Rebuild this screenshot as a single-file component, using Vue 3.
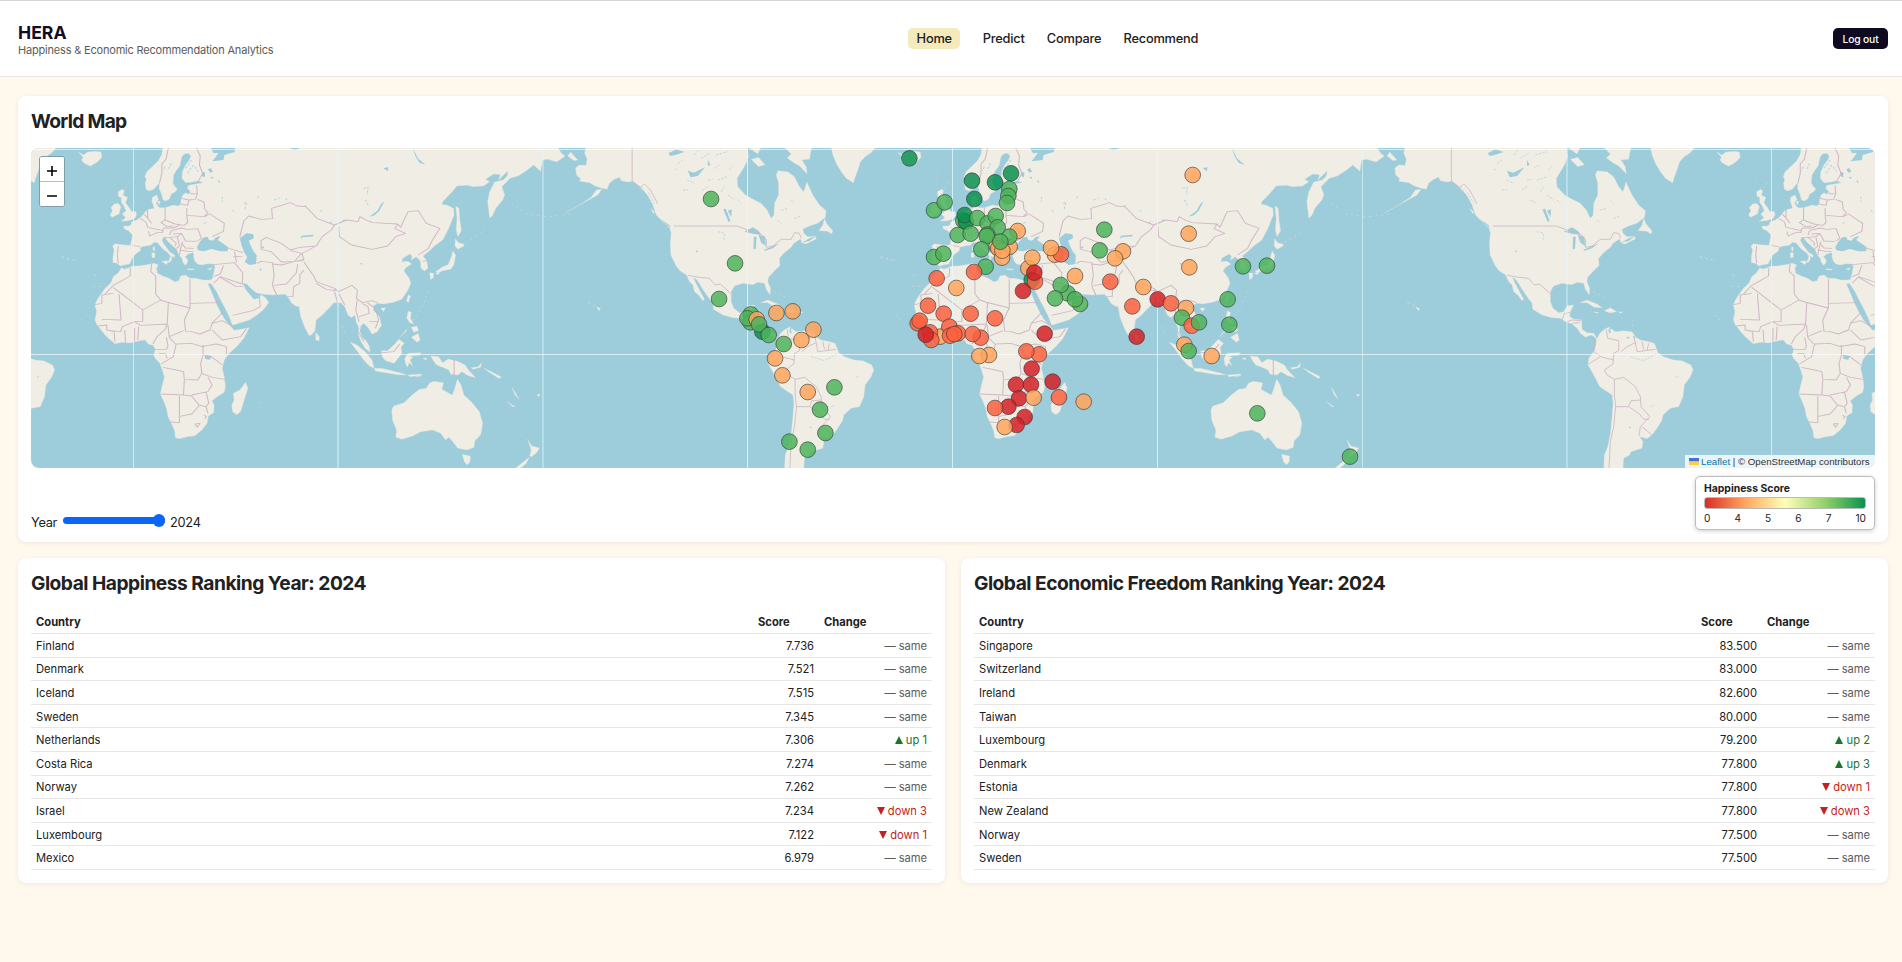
<script setup>
const nav = ['Home', 'Predict', 'Compare', 'Recommend']

const tables = [
  {
    title: 'Global Happiness Ranking Year: 2024',
    rows: [
      ['Finland', '7.736', 0], ['Denmark', '7.521', 0], ['Iceland', '7.515', 0], ['Sweden', '7.345', 0],
      ['Netherlands', '7.306', 1], ['Costa Rica', '7.274', 0], ['Norway', '7.262', 0], ['Israel', '7.234', -3],
      ['Luxembourg', '7.122', -1], ['Mexico', '6.979', 0],
    ],
  },
  {
    title: 'Global Economic Freedom Ranking Year: 2024',
    rows: [
      ['Singapore', '83.500', 0], ['Switzerland', '83.000', 0], ['Ireland', '82.600', 0], ['Taiwan', '80.000', 0],
      ['Luxembourg', '79.200', 2], ['Denmark', '77.800', 3], ['Estonia', '77.800', -1], ['New Zealand', '77.800', -3],
      ['Norway', '77.500', 0], ['Sweden', '77.500', 0],
    ],
  },
]

const kind = (n) => (n > 0 ? 'up' : n < 0 ? 'down' : 'same')
const ticks = [0, 4, 5, 6, 7, 10]

// World copies, left to right, in map units (three per pixel)
const copies = [306.9, 2764.5, 5222.1]

const meridians = [
  { x: 307.5, w: 3, o: 0.75 }, { x: 921, w: 4, o: 0.7 }, { x: 1536, w: 6, o: 0.4 }, { x: 2149.5, w: 3, o: 0.85 },
  { x: 2764.5, w: 3, o: 0.8 }, { x: 3379.5, w: 3, o: 0.8 }, { x: 3994.5, w: 3, o: 0.6 }, { x: 4608, w: 6, o: 0.4 },
  { x: 5221.5, w: 3, o: 0.75 },
]

// d: very high, g: high, o: medium, t: low, r: very low
const pinGroups = [
  {
    dx: 1527.2, dy: -24,
    pins: [
      [1108, 55, 'd'], [513, 177, 'g'], [585, 370, 'g'], [537, 477, 'g'], [632, 523, 'g'], [631, 547, 'g'], [622, 535, 'g'],
      [650, 538, 'o'], [667, 575, 'd'], [657, 553, 'g'], [686, 585, 'g'], [709, 519, 'o'], [758, 514, 'o'], [820, 569, 'o'],
      [784, 600, 'o'], [731, 612, 'g'], [705, 655, 'o'], [727, 706, 'o'], [803, 756, 'o'], [883, 742, 'g'], [840, 809, 'g'],
      [856, 879, 'g'], [748, 905, 'g'], [803, 929, 'g'],
    ],
  },
  {
    dx: 2577, dy: -24,
    pins: [
      [132, 211, 'g'], [164, 187, 'g'], [246, 122, 'd'], [315, 127, 'd'], [363, 100, 'd'], [358, 147, 'g'], [355, 168, 'g'],
      [351, 189, 'g'], [253, 177, 'd'], [220, 242, 'g'], [228, 245, 'd'], [224, 225, 'd'], [262, 234, 'g'], [293, 250, 'g'],
      [317, 228, 'g'], [203, 285, 'g'], [242, 281, 'g'], [383, 273, 'o'], [359, 320, 'o'], [320, 316, 'o'], [325, 325, 'o'],
      [336, 353, 'o'], [337, 332, 'o'], [358, 290, 'g'], [323, 262, 'g'], [292, 284, 'g'], [290, 288, 'g'], [331, 305, 'g'],
      [274, 328, 'g'], [132, 351, 'g'], [160, 341, 'g'], [287, 380, 'g'], [252, 396, 't'], [140, 415, 't'], [199, 444, 'o'],
      [495, 344, 'o'], [513, 343, 't'], [483, 324, 'o'], [415, 385, 'o'], [427, 353, 'o'], [425, 420, 'd'], [435, 425, 't'],
      [433, 398, 'r'], [399, 453, 'r'], [555, 408, 'o'], [533, 460, 'g'], [512, 435, 'g'], [495, 475, 'g'], [570, 492, 'g'],
      [555, 478, 'g'], [114, 497, 't'], [161, 521, 't'], [242, 521, 't'], [315, 535, 't'],
    ],
  },
  {
    dx: 2577, dy: 426,
    pins: [
      [83, 100, 't'], [89, 92, 't'], [150, 140, 'o'], [120, 127, 't'], [124, 150, 't'], [107, 134, 'r'], [178, 110, 't'],
      [204, 130, 't'], [180, 137, 't'], [193, 132, 't'], [272, 143, 't'], [248, 132, 't'], [464, 131, 'r'], [297, 195, 'o'],
      [268, 198, 'o'], [447, 193, 't'], [409, 184, 't'], [425, 236, 'r'], [378, 284, 'r'], [423, 284, 'r'], [488, 275, 'r'],
      [507, 322, 't'], [387, 325, 'r'], [431, 323, 'o'], [355, 350, 'r'], [315, 354, 't'], [404, 381, 'r'], [380, 405, 'r'],
      [344, 411, 'o'], [581, 335, 'o'],
    ],
  },
  {
    dx: 3147, dy: -24,
    pins: [
      [73, 269, 'g'], [59, 331, 'g'], [129, 334, 'o'], [105, 355, 'o'], [91, 425, 't'], [338, 105, 'o'], [326, 281, 'o'],
      [328, 382, 'o'], [190, 441, 'o'], [157, 499, 't'], [233, 478, 'r'], [273, 490, 't'], [318, 504, 'o'], [170, 590, 'r'],
      [306, 533, 'g'], [335, 557, 't'], [357, 547, 'g'], [313, 614, 'o'], [326, 633, 'g'], [395, 648, 'o'], [443, 478, 'g'],
      [448, 554, 'g'], [489, 379, 'g'], [561, 377, 'g'], [532, 820, 'g'], [810, 950, 'g'],
    ],
  },
]
</script>

<template>
  <div class="page">
    <header class="topbar">
      <div class="brand">
        <div class="brand-name">HERA</div>
        <div class="brand-sub">Happiness &amp; Economic Recommendation Analytics</div>
      </div>
      <nav class="nav">
        <a v-for="(n, i) in nav" :key="n" :class="['nav-link', { active: i === 0 }]">{{ n }}</a>
      </nav>
      <button class="logout">Log out</button>
    </header>

    <main class="content">
      <section class="card map-card">
        <h2 class="map-title">World Map</h2>
        <div class="map">
          <svg class="map-svg" viewBox="0 0 5532 960" preserveAspectRatio="none">
            <defs>
              <g id="world">
                <!-- Europe, Africa, Asia and Oceania -->
                <g transform="scale(1.2245 1) translate(-327 -24)">
                  <path class="land" d="M400 20L396 45L388 62L375 78L360 95L355 110L359 118L356 130L358 148L366 153L378 147L386 135L391 130L390 145L396 162L400 180L407 183L416 176L420 162L430 155L435 147L428 138L424 128L426 105L432 92L441 78L446 50L452 42L462 40L468 48L464 60L455 75L447 95L446 115L455 128L470 127L487 122L497 128L480 132L462 136L459 145L466 153L462 163L455 158L448 165L444 180L443 192L438 198L425 195L405 203L398 203L392 203L387 198L383 188L389 178L384 165L374 171L372 183L376 196L378 205L365 208L358 213L352 222L344 233L335 240L322 246L322 253L316 258L303 258L304 266L315 272L325 285L322 305L320 316L300 314L282 311L276 318L280 330L277 350L277 368L287 370L295 378L304 375L318 372L325 355L330 345L344 332L345 322L357 318L370 316L378 307L386 308L393 318L400 328L412 338L418 348L416 358L411 368L418 366L422 355L420 349L428 352L429 346L416 335L410 325L402 312L397 300L401 293L406 294L412 305L424 318L433 328L437 340L440 348L446 354L448 366L454 376L459 370L461 360L454 350L462 342L472 338L476 342L474 348L478 364L484 372L495 375L510 371L524 372L527 380L524 400L520 418L512 420L498 420L480 415L466 415L455 405L443 408L438 422L428 425L415 415L400 408L386 400L384 385L388 374L378 370L360 374L340 378L325 378L315 384L305 387L298 383L290 398L278 410L272 428L258 445L246 465L238 480L233 495L237 515L233 540L238 555L248 570L258 585L268 597L282 611L300 607L318 609L340 603L356 600L363 612L375 616L381 628L377 645L380 655L392 670L398 690L403 712L398 735L393 762L402 785L408 805L412 830L420 850L428 872L430 893L440 896L460 890L478 887L495 870L508 850L511 828L524 818L525 795L520 782L535 768L550 757L553 740L550 710L545 685L550 660L562 640L580 620L598 595L611 563L590 568L574 571L567 560L552 540L540 515L530 490L520 460L510 432L517 430L523 440L531 455L540 478L552 505L562 530L570 556L590 548L612 540L630 525L645 510L655 495L659 487L650 472L640 464L634 475L622 478L614 466L603 450L595 430L605 432L615 445L628 458L645 463L670 465L700 463L708 475L715 490L725 498L733 500L737 530L748 565L758 587L764 584L772 572L775 540L790 525L810 500L818 488L835 488L845 500L853 525L862 533L870 525L873 545L880 565L878 582L885 605L895 625L907 637L905 618L898 603L888 592L882 575L884 558L892 550L903 565L912 583L925 575L935 555L930 530L915 510L915 498L925 490L940 492L965 487L985 478L1000 450L1007 430L1003 415L990 392L996 382L1009 372L1000 364L985 365L987 355L1005 342L1010 348L1008 360L1020 350L1030 362L1032 385L1040 393L1049 385L1046 362L1037 348L1050 335L1065 318L1085 300L1100 265L1113 225L1112 205L1095 195L1083 193L1085 185L1105 160L1120 138L1145 136L1160 140L1185 138L1200 125L1190 118L1210 102L1226 104L1222 120L1245 92L1243 108L1233 120L1212 126L1200 155L1195 185L1200 235L1208 225L1215 205L1232 180L1237 165L1230 140L1250 115L1270 108L1290 92L1308 75L1325 94L1330 60L1342 58L1365 66L1385 48L1376 40L1366 20Z" />
                  <path class="land" d="M290 155L300 148L305 152L302 166L313 172L308 188L318 205L322 214L334 215L335 226L330 236L315 242L297 244L308 233L300 222L309 212L304 198L298 188L297 172L291 170ZM280 192L290 190L297 200L292 222L275 232L270 225L276 212L272 203ZM192 35L205 45L215 36L235 34L248 36L250 52L240 65L222 79L207 70L200 60L204 52ZM602 727L608 745L600 775L590 815L580 824L570 815L568 795L574 780L572 760L588 750ZM774 578L783 590L782 602L774 600ZM858 606L875 615L895 635L912 660L917 685L905 678L890 658L875 632ZM917 685L935 685L960 692L985 700L997 705L975 704L945 698L920 693ZM1000 705L1030 702L1034 706L1004 710ZM1018 712L1035 702L1030 708ZM935 632L950 632L965 615L978 598L991 610L983 622L985 640L975 656L966 670L945 662L937 650ZM992 655L1000 640L1032 638L1028 646L1002 648L1012 652L1005 660L1012 678L1003 668L999 681L994 672ZM1000 513L1008 517L1006 535L1014 552L1005 548L997 535ZM1008 592L1025 580L1030 600L1022 607ZM1008 562L1022 558L1026 572L1014 577ZM980 592L997 567L995 574ZM1001 464L1006 468L1001 488L996 482ZM933 505L945 503L940 515ZM1116 296L1124 308L1138 313L1136 319L1122 328L1115 318ZM1110 333L1117 345L1112 375L1105 388L1085 392L1075 398L1068 395L1085 380L1098 374L1105 355ZM1053 398L1063 400L1062 413L1055 419ZM1066 400L1078 396L1074 404ZM1117 198L1125 205L1127 240L1131 272L1122 290L1118 270L1120 235ZM1056 648L1075 650L1085 668L1098 657L1120 663L1140 675L1148 690L1166 713L1148 707L1132 695L1122 705L1105 703L1100 690L1085 682L1070 675L1062 662ZM1154 683L1172 680L1180 668L1178 682L1160 688ZM1063 724L1087 728L1083 748L1108 765L1114 748L1121 717L1130 735L1137 765L1155 785L1175 815L1183 850L1178 885L1164 902L1162 922L1145 930L1122 925L1110 905L1100 892L1092 900L1080 880L1060 870L1030 876L1012 888L985 898L970 892L972 870L962 840L960 810L965 798L990 788L1010 765L1028 748L1045 745L1052 730ZM1133 943L1153 948L1152 965L1145 975L1138 965ZM1293 898L1303 918L1322 924L1315 938L1303 950L1298 948L1302 930ZM1297 952L1290 970L1275 986L1262 986L1280 968ZM372 338L380 338L380 352L373 353ZM376 320L380 322L379 334L375 330ZM396 364L412 362L409 374ZM460 386L476 387L474 390L460 389ZM508 387L520 383L516 390ZM385 184L393 184L391 195ZM1316 764L1325 762L1320 770ZM1243 785L1262 800L1257 800ZM1255 742L1264 760L1272 778L1262 764ZM1186 684L1228 710L1224 716L1198 696ZM1036 655L1046 654L1044 660Z" />
                  <path class="water" d="M485 331L483 322L490 305L500 292L510 291L512 299L522 302L530 292L541 288L534 300L546 310L560 322L558 334L540 334L518 327L500 334ZM588 295L604 280L621 283L622 295L610 302L615 318L622 335L629 345L628 372L612 375L600 366L606 352L598 335L592 315ZM905 230L918 226L930 212L942 184L934 192L925 212ZM737 297L740 287L768 284L768 289L742 292ZM515 20L524 40L536 38L526 56L520 64L548 60L550 45L575 36L578 20ZM710 24L722 31L736 24ZM502 648L518 647L515 659L503 657ZM510 88L517 84L522 95L515 98ZM496 95L503 98L502 112L495 108ZM516 112L522 110L520 118ZM640 325L645 318L648 325ZM882 370L888 370L887 375ZM535 118L540 128L536 128ZM940 84L952 82L950 94ZM1012 24L1024 55L1043 75L1028 68L1018 48ZM636 385L642 388L638 393Z" />
                  <path class="speck" d="M890 145L902 142L900 165M895 180L905 200M598 190L605 186L600 210M672 180L685 174M700 175L704 180M745 200L752 195M785 215L792 208M545 170L545 185M570 210L574 215M630 175L636 168M808 250L815 240M840 242L846 238M500 250L510 246M420 70L412 90M405 80L400 92M455 85L470 60M478 80L486 95M460 100L474 75" />
                  <path class="islet" d="M1012 542L1035 500L1050 450M1006 545L990 590M1255 190L1290 222L1345 230L1400 222M1140 308L1170 285L1195 262M150 352L185 362M230 405L236 407M228 438L252 440M188 525L200 540M1440 488L1468 508M636 790L650 782M840 560L848 590M286 122L290 128M306 146L320 120" />
                  <path class="border" d="M413 24L407 58L397 72L397 100L391 130M482 24L491 48L489 75L497 100L487 122M482 136L484 160L479 178L463 180L445 175M463 180L460 196L443 192M484 160L470 162L462 153M484 178L500 186L502 208L510 218L500 230L458 226L458 204M502 230L515 222L550 250L548 274L520 290M458 226L460 248L452 256L430 252L405 240L405 203M404 240L395 248L410 260L425 258M362 208L362 235L372 250M364 235L352 222M344 236L358 246L362 262L385 268L400 272L398 278L385 278L368 288L364 274M398 272L402 264L425 264L440 256M416 285L420 272L445 264L460 268L485 266L494 296L483 303M445 280L455 303L482 304M400 292L418 292L435 290L445 280L425 282M416 292L432 310L430 318M435 290L440 318L432 326M445 310L455 324L475 325M440 330L462 334L474 334M448 305L442 330L440 346M344 320L325 316M290 318L288 345L290 370M320 384L319 408L296 424L278 436L258 462M372 372L370 395L382 408L382 462L394 480L408 486L466 504L466 418M278 442L350 510L394 480M233 494L250 490L250 465L278 460M292 462L297 540L250 538M350 510L350 545L330 545L300 560L296 575L270 572M330 545L345 556L410 552L413 486M466 504L466 490L538 488M466 504L452 540L455 574L470 575L490 582L515 570L520 550L545 518M520 550L545 542L572 560M520 570L545 600L590 590L604 566M240 558L262 555L262 570L280 575L282 605M306 570L308 608M330 565L330 604M340 560L338 600M375 612L385 590L405 568L410 552M412 555L415 590L450 572M380 628L408 628L412 618L408 592M432 612L470 610L495 620L498 616L498 645L492 670L495 700L485 720L452 718L450 695L432 690L400 682M432 612L425 650L395 672M390 640L405 640L410 655M415 592L430 612M495 620L530 612L555 620L555 645M500 645L518 650L546 675M495 700L520 712L552 718M452 720L450 765L394 762M450 765L470 768L488 795L505 800L510 820M440 768L440 848L418 846M438 830L470 822L488 797M470 765L510 755L520 735L510 712M505 755L512 790L505 800M478 852L490 850L484 862ZM500 825L506 830L502 836M524 374L575 368L595 398L594 432L540 410L524 430M524 410L540 402L548 376M560 325L596 338M575 335L580 368M572 350L594 350M596 440L580 440L540 412M636 470L638 500L620 512L570 526M588 290L598 242L610 228L640 238L668 236L666 205L712 188L728 198L750 200L778 236L820 255L812 270L790 290L775 318L735 322L712 330L690 310L652 292L640 302L640 328M640 328L665 335L690 366L722 364L738 342L775 318M712 332L740 340L745 358L725 364M630 370L640 364L668 368L672 405L668 436L678 465M668 372L690 375L722 364L745 362M672 436L702 432L726 400L730 372M745 366L770 410L775 425L820 445L830 455L862 436L876 450L874 475L888 488L912 482L925 488M745 390L735 405L735 430L720 440L718 470L705 470M775 430L800 448L822 452L820 445M820 455L828 490M830 460L845 495M876 475L872 510L880 545M888 490L902 500L905 520L880 530M900 488L920 505L928 540L920 565M905 545L925 545M820 255L850 240L878 245L882 230L900 242L915 248L975 252L982 262L1000 215L1025 212L1045 250L1078 265L1060 300L1050 325L1025 345M830 258L832 290L862 315L912 328L950 318L970 290L994 280L968 266L975 252M1113 660L1113 705M936 638L965 635L980 612M878 575L892 605M1036 364L1048 362" />
                </g>
                <!-- The Americas and Greenland -->
                <g transform="translate(-1174 -24)">
                  <path class="land" d="M75 20L70 40L78 58L74 76L55 75L43 84L46 105L58 116L55 124L85 128L102 138L122 145L138 148L145 130L160 118L175 112L180 122L200 126L215 124L235 140L258 165L275 195L285 225L305 245L325 262L330 280L327 310L329 345L345 378L356 392L376 405L385 425L395 435L400 455L412 465L425 482L430 478L415 450L402 425L396 412L408 420L425 448L440 470L455 490L457 508L485 525L515 533L540 535L555 545L575 552L590 565L600 580L615 592L632 585L642 590L648 600L646 617L640 635L625 655L623 675L640 705L658 740L695 765L698 790L695 830L690 880L682 920L672 945L670 986L728 986L730 955L748 945L752 935L785 925L788 905L778 890L800 896L815 885L830 865L845 840L848 825L870 805L895 800L908 770L912 735L930 710L938 690L932 675L905 662L880 660L850 650L833 638L822 610L800 604L780 600L765 590L755 575L730 572L705 575L692 566L684 576L688 560L672 568L658 580L650 596L640 580L620 578L605 568L604 540L580 537L568 530L570 515L580 495L560 497L550 515L535 518L518 505L510 485L510 455L520 438L545 430L575 434L590 427L610 430L615 448L627 465L628 445L620 425L622 412L640 392L656 377L655 355L668 340L690 322L698 310L718 297L722 308L745 295L765 288L740 290L728 280L725 268L745 258L770 250L793 232L795 212L775 195L755 165L737 125L728 155L715 140L700 110L680 95L650 92L645 105L652 130L652 165L640 190L638 225L630 235L618 210L600 190L570 175L553 165L530 140L528 115L545 88L555 70L562 50L558 20ZM810 20L815 45L825 70L840 95L855 115L877 129L882 112L892 85L898 65L912 50L930 38L945 20ZM668 20L690 42L678 54L700 70L715 78L738 102L735 80L722 60L745 58L752 20ZM570 58L592 52L612 74L592 80L580 68ZM790 235L797 252L815 272L812 282L798 274L773 272L785 255ZM598 488L620 480L650 492L665 503L642 502L620 488ZM672 512L690 503L709 515L688 519ZM640 516L655 517L650 520ZM714 515L727 516L720 520ZM758 590L766 588L763 596ZM268 205L280 215L278 222ZM300 238L328 258L322 262ZM106 500L118 506L114 512ZM28 36L50 60L38 62L20 48ZM560 20L600 20L590 42ZM720 308L745 303L762 290L766 296L735 312Z" />
                  <path class="land" d="M122 148L110 165L60 192L12 219L50 198L90 172L105 150Z" />
                  <path class="water" d="M550 275L575 262L592 272L600 284L578 282ZM578 290L586 290L584 326L577 328ZM592 284L612 290L614 318L600 308ZM608 330L655 310L635 325L612 332ZM486 208L494 206L508 242L502 246ZM500 212L512 208L510 232ZM322 40L345 28L370 36L345 44L328 48ZM380 92L398 98L432 82L410 108L388 112ZM404 330L410 334L407 338ZM684 568L692 575L688 582ZM540 540L548 544L545 548ZM745 860L751 860L750 866ZM738 590L748 592L742 597ZM440 60L448 75L440 78Z" />
                  <path class="speck" d="M400 45L412 30M420 55L445 40M350 70L365 60M460 85L475 75M470 120L500 110M425 150L440 140M480 155L490 140M365 150L380 150M505 90L515 78M440 120L455 118M500 165L520 180M450 180L470 190M530 180L540 190M378 120L400 130M340 90L350 85M465 45L500 35M660 210L680 205M700 235L720 228M650 240L660 250M690 180L700 190M240 140L270 185M246 152L275 195M262 158L280 190M750 650L790 662L830 640M810 800L822 795M885 712L897 708M470 275L490 280L488 302" />
                  <path class="islet" d="M960 350L1005 362M84 488L104 494M640 455L680 475M755 540L760 570M1126 97L1130 99" />
                  <path class="border" d="M213 24L213 124L238 142L250 132L268 150L288 188L288 192M338 258L528 258L560 270L598 280L616 300L615 322L635 318L660 298L690 298L700 278L715 280L720 295M380 406L415 412L445 415L462 435L478 432L508 460M545 540L552 520L570 518M560 545L575 540L602 542M575 550L600 548M645 595L642 632M678 568L682 595L715 602L715 632L700 640L698 672L672 690L680 705L702 718L702 765L706 800L700 860L690 905L686 984M625 672L660 650L700 660M640 635L660 648M760 588L765 608L740 620L722 635M765 608L770 635L825 628M785 605L790 628M805 610L800 632M702 718L730 712L765 740L780 770L782 800L800 820L808 830L780 860L776 888M706 800L745 800L752 782L780 780M745 800L775 820L790 838L805 838M785 860L815 885" />
                </g>
              </g>
            </defs>
            <rect class="water" width="5532" height="960" />
            <use v-for="x in copies" :key="x" href="#world" :transform="`translate(${x} 0)`" />
            <rect v-for="m in meridians" :key="m.x" :x="m.x - m.w / 2" y="0" :width="m.w" height="960" fill="#dcfbff" :opacity="m.o" />
            <rect x="0" y="3" width="5532" height="3" fill="#fff" opacity=".6" />
            <rect x="0" y="618" width="5532" height="3" fill="#fff" opacity=".65" />
            <g v-for="(g, i) in pinGroups" :key="i" :transform="`translate(${g.dx} ${g.dy})`">
              <circle v-for="(p, j) in g.pins" :key="j" :class="['pin', p[2]]" :cx="p[0]" :cy="p[1]" r="23.6" />
            </g>
          </svg>
          <div class="zoom-ctl">
            <button><svg viewBox="0 0 12 12"><path d="M1 6H11M6 1V11" /></svg></button>
            <button><svg viewBox="0 0 12 12"><path d="M1 6H11" /></svg></button>
          </div>
          <div class="attribution">
            <svg class="flag" viewBox="0 0 10 7"><path fill="#4470df" d="M0 0h10v3.5H0z" /><path fill="#fcd13e" d="M0 3.5h10V7H0z" /></svg>
            <a>Leaflet</a> | © OpenStreetMap contributors
          </div>
        </div>
        <div class="map-foot">
          <div class="year">
            <span class="year-text">Year</span>
            <span class="slider"><span class="thumb"></span></span>
            <span class="year-text">2024</span>
          </div>
          <div class="legend">
            <div class="legend-title">Happiness Score</div>
            <div class="legend-bar"></div>
            <div class="legend-ticks"><span v-for="t in ticks" :key="t">{{ t }}</span></div>
          </div>
        </div>
      </section>

      <div class="tables">
        <section v-for="t in tables" :key="t.title" class="card table-card">
          <h2>{{ t.title }}</h2>
          <table>
            <colgroup><col /><col class="c-score" /><col class="c-change" /></colgroup>
            <thead>
              <tr><th>Country</th><th>Score</th><th>Change</th></tr>
            </thead>
            <tbody>
              <tr v-for="r in t.rows" :key="r[0]">
                <td>{{ r[0] }}</td>
                <td class="num">{{ r[1] }}</td>
                <td :class="['num', kind(r[2])]">
                  <template v-if="r[2] === 0">— same</template>
                  <template v-else>
                    <svg class="tri" viewBox="0 0 8 8"><path :d="r[2] > 0 ? 'M4 0L8 8H0Z' : 'M0 0H8L4 8Z'" /></svg>
                    {{ kind(r[2]) }} {{ Math.abs(r[2]) }}
                  </template>
                </td>
              </tr>
            </tbody>
          </table>
        </section>
      </div>
    </main>
  </div>
</template>

<style>
body { background: #fff8ec; }
</style>

<style scoped>
.page { min-height: 962px; background: #fff8ec; color: #212121; font-family: Inter, "Liberation Sans", sans-serif; box-sizing: border-box; }
.topbar { box-sizing: border-box; height: 77px; display: flex; align-items: center; padding: 0 14px 0 18px; background: #fff; border-top: 1px solid #d6d6d6; border-bottom: 1px solid #e8e8e8; }
.brand { width: 890px; }
.brand-name { font-size: 17.6px; line-height: 19px; font-weight: 700; color: #130d24; letter-spacing: 0; margin-top: 3px; }
.brand-sub { font-size: 11px; line-height: 14px; margin-top: 1px; color: #5b5b5b; letter-spacing: -0.19px; }
.nav { display: flex; gap: 22.3px; }
.nav-link { height: 21px; line-height: 21px; border-radius: 5px; font-size: 12.8px; font-weight: 500; letter-spacing: -0.22px; }
.nav-link.active { background: #f4eabc; padding: 0 8.6px; }
.logout { margin-left: auto; width: 55px; height: 21px; padding: 1px 0 0; border: 0; border-radius: 5px; background: #0f0a1f; color: #fff; font: 500 10.3px/20px Inter, sans-serif; letter-spacing: -0.15px; }

.content { padding: 19px 14px 0 18px; }
.card { background: #fff; border-radius: 8px; box-shadow: 0 1px 5px rgba(0, 0, 0, 0.07); box-sizing: border-box; }
h2 { margin: 0; font-size: 19.2px; line-height: 24px; font-weight: 700; letter-spacing: -0.5px; }
.map-title { letter-spacing: -0.7px; }
.map-card { height: 446px; padding: 13px 13px 0; }
.map { position: relative; height: 320px; margin-top: 15px; border-radius: 8px; overflow: hidden; }
.map-svg { display: block; width: 100%; height: 320px; }
.land { fill: #f0ede5; stroke: #d5e0df; stroke-width: 1; }
.water { fill: #9dccda; }
.speck { fill: none; stroke: #9dccda; stroke-width: 2.6; opacity: 0.7; stroke-dasharray: 7 4; }
.islet { fill: none; stroke: #e3e6e0; stroke-width: 2; opacity: 0.6; stroke-dasharray: 6 9; }
.border { fill: none; stroke: #cbb3c2; stroke-width: 2.6; stroke-linejoin: round; opacity: 0.9; }
.pin { fill-opacity: 0.85; stroke: #333; stroke-opacity: 0.75; stroke-width: 2.4; }
.d { fill: #0a9150; }
.g { fill: #4db35a; }
.o { fill: #ffa55c; }
.t { fill: #fb6040; }
.r { fill: #d42026; }

.zoom-ctl { position: absolute; left: 8px; top: 8px; width: 26px; height: 51px; box-sizing: border-box; border: 1px solid #7f9da6; border-radius: 3px; background: #fff; overflow: hidden; }
.zoom-ctl button { display: flex; align-items: center; justify-content: center; width: 24px; height: 24px; padding: 4px 0 0; border: 0; background: #fff; }
.zoom-ctl button + button { border-top: 1px solid #bbb; height: 25px; }
.zoom-ctl svg { width: 12px; height: 12px; fill: none; stroke: #000; stroke-width: 1.6; }
.attribution { position: absolute; right: 0; bottom: 0; width: 190px; height: 13px; box-sizing: border-box; padding-left: 4px; white-space: nowrap; background: rgba(255, 255, 255, 0.8); color: #333; font: 9.7px/13px "Liberation Sans", Arial, sans-serif; }
.attribution a { color: #0078a8; }
.flag { width: 10px; height: 7px; margin-right: 2px; }

.map-foot { display: flex; justify-content: space-between; align-items: flex-start; padding-top: 8px; }
.year { display: flex; align-items: center; font-size: 12.8px; line-height: 16px; margin-top: 38px; }
.year-text { position: relative; top: 1px; letter-spacing: -0.3px; }
.slider { position: relative; width: 102px; height: 7px; margin: 0 5px 3px 6px; border-radius: 4px; background: #0a66f5; }
.thumb { position: absolute; right: 0; top: -3px; width: 12.5px; height: 12.5px; border-radius: 50%; background: #0a66f5; }
.legend { width: 180px; height: 54px; box-sizing: border-box; padding: 5px 8px 0; border: 1px solid #bdbdbd; border-radius: 5px; background: #fff; box-shadow: 0 1px 4px rgba(0, 0, 0, 0.2); }
.legend-title { font-size: 10.4px; line-height: 14px; font-weight: 700; }
.legend-bar { height: 12px; margin-top: 1px; box-sizing: border-box; border: 1px solid #bbb; border-radius: 3px; background: linear-gradient(90deg, #d92c29, #fea65d 25%, #ffffb8 50%, #93d068 75%, #07924f); }
.legend-ticks { display: flex; justify-content: space-between; margin-top: 3px; font-size: 10.1px; line-height: 13px; }

.tables { display: grid; grid-template-columns: 1fr 1fr; gap: 16px; margin-top: 16px; }
.table-card { height: 325px; padding: 13px 13px 0; }
table { width: 100%; margin-top: 15px; border-collapse: collapse; table-layout: fixed; font-size: 11.2px; }
.c-score { width: 66px; }
.c-change { width: 113px; }
th, td { height: 23.6px; box-sizing: border-box; padding: 1px 5px 0; text-align: left; border-bottom: 1px solid #e7e7e7; line-height: 14px; white-space: nowrap; }
th { font-weight: 700; padding: 0 5px; }
.num { text-align: right; }
.same { color: #5c5c5c; letter-spacing: -0.05px; }
.up { color: #1c752b; }
.down { color: #c51f20; }
.tri { width: 8px; height: 8px; fill: currentColor; }
</style>
